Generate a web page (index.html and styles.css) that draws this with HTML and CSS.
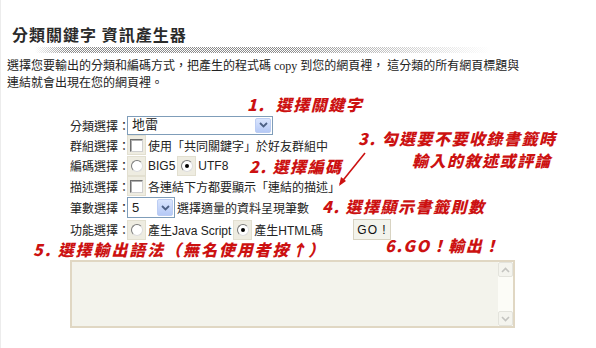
FILE: index.html
```html
<!DOCTYPE html>
<html lang="zh-Hant">
<head>
<meta charset="utf-8">
<title>分類關鍵字 資訊產生器</title>
<link rel="stylesheet" href="styles.css">
</head>
<body>
<div class="page">
  <h1 class="title">分類關鍵字 資訊產生器</h1>
  <div class="rule"></div>
  <p class="intro">選擇您要輸出的分類和編碼方式，把產生的程式碼 copy 到您的網頁裡， 這分類的所有網頁標題與<br>連結就會出現在您的網頁裡。</p>

  <div class="form">
    <div class="row r1">
      <span class="label">分類選擇：</span>
      <span class="select sel-wide"><span class="sel-text">地雷</span><span class="sel-btn"><svg width="9" height="6" viewBox="0 0 9 6"><path d="M1 1 L4.5 4.5 L8 1" fill="none" stroke="#4d6185" stroke-width="1.8"/></svg></span></span>
    </div>
    <div class="row r2">
      <span class="label">群組選擇：</span>
      <span class="ibox"><span class="check"></span></span>
      <span class="txt">使用「共同關鍵字」於好友群組中</span>
    </div>
    <div class="row r3">
      <span class="label">編碼選擇：</span>
      <span class="ibox"><span class="radio"></span></span>
      <span class="txt">BIG5</span>
      <span class="ibox"><span class="radio on"></span></span>
      <span class="txt">UTF8</span>
    </div>
    <div class="row r4">
      <span class="label">描述選擇：</span>
      <span class="ibox"><span class="check"></span></span>
      <span class="txt">各連結下方都要顯示「連結的描述」</span>
    </div>
    <div class="row r5">
      <span class="label">筆數選擇：</span>
      <span class="select sel-small"><span class="sel-text">5</span><span class="sel-btn"><svg width="9" height="6" viewBox="0 0 9 6"><path d="M1 1 L4.5 4.5 L8 1" fill="none" stroke="#4d6185" stroke-width="1.8"/></svg></span></span>
      <span class="txt">選擇適量的資料呈現筆數</span>
    </div>
    <div class="row r6">
      <span class="label">功能選擇：</span>
      <span class="ibox"><span class="radio"></span></span>
      <span class="txt">產生Java Script</span>
      <span class="ibox"><span class="radio on"></span></span>
      <span class="txt">產生HTML碼</span>
      <span class="go">GO !</span>
    </div>
    <div class="output">
      <div class="out-area"></div>
      <div class="scroll">
        <span class="sbtn"><svg width="9" height="6" viewBox="0 0 9 6"><path d="M1 5 L4.5 1.5 L8 5" fill="none" stroke="#c4c4c0" stroke-width="1.6"/></svg></span>
        <span class="strack"></span>
        <span class="sbtn"><svg width="9" height="6" viewBox="0 0 9 6"><path d="M1 1 L4.5 4.5 L8 1" fill="none" stroke="#c4c4c0" stroke-width="1.6"/></svg></span>
      </div>
    </div>
  </div>

  <div class="note n1">1.&nbsp; 選擇關鍵字</div>
  <div class="note n3a">3. 勾選要不要收錄書籤時</div>
  <div class="note n3b">輸入的敘述或評論</div>
  <div class="note n2">2. 選擇編碼</div>
  <div class="note n4">4. 選擇顯示書籤則數</div>
  <div class="note n5">5. 選擇輸出語法（無名使用者按↑）</div>
  <div class="note n6">6.GO！輸出！</div>
  <svg class="arrow" width="40" height="40" viewBox="0 0 40 40">
    <path d="M30 3 L5 34" fill="none" stroke="#cc1111" stroke-width="1.6"/>
    <path d="M4 36 L6 27 L11 31 Z" fill="#cc1111"/>
  </svg>
</div>
</body>
</html>
```

FILE: styles.css
```css
html, body {
  margin: 0;
  padding: 0;
  background: #fff;
}
body {
  width: 596px;
  height: 348px;
  overflow: hidden;
}
.page {
  position: relative;
  height: 348px;
  border-left: 1px solid #ececec;
  box-sizing: border-box;
  color: #222;
  font-family: "Liberation Sans", "Noto Sans CJK TC", sans-serif;
}
.title {
  margin: 0;
  padding: 24px 0 0 11px;
  font-size: 16px;
  line-height: 20px;
  font-weight: bold;
  letter-spacing: 1px;
  color: #2a2a2a;
  font-family: "Noto Sans CJK TC", sans-serif;
}
.rule {
  margin: 3px 0 0 34px;
  width: 456px;
  height: 6px;
  background-image: repeating-conic-gradient(#8a8a8a 0 25%, #fff 0 50%);
  background-size: 2px 2px;
  -webkit-mask-image: linear-gradient(to right, transparent 0, #000 7%, #000 55%, transparent 100%);
  mask-image: linear-gradient(to right, transparent 0, #000 7%, #000 55%, transparent 100%);
}
.intro {
  margin: 5px 0 0 6px;
  font-size: 12px;
  line-height: 17px;
  font-family: "Liberation Serif", "Noto Sans CJK TC", serif;
  color: #222;
}
.form {
  margin: 23px 0 0 69px;
  font-size: 12px;
}
.row {
  display: flex;
  align-items: center;
}
.r1 { height: 20px; }
.r2 { height: 20px; }
.r3 { height: 21px; }
.r4 { height: 20px; }
.r5 { height: 23px; }
.r6 { height: 21px; }
.label {
  width: 57px;
  flex: none;
  white-space: nowrap;
}
.txt {
  white-space: nowrap;
  margin: 0 2px 0 2px;
}
.ibox {
  width: 19px;
  height: 20px;
  box-sizing: border-box;
  background: #eeece1;
  border: 1px solid #e2dfd0;
  display: flex;
  align-items: center;
  justify-content: center;
  flex: none;
}
.check {
  width: 13px;
  height: 13px;
  box-sizing: border-box;
  background: #fff;
  border: 1px solid;
  border-color: #6e6e6e #d0d0d0 #d0d0d0 #6e6e6e;
  box-shadow: inset 1px 1px 0 #b0b0b0;
}
.radio {
  width: 12px;
  height: 12px;
  box-sizing: border-box;
  border-radius: 50%;
  background: #fff;
  border: 1px solid;
  border-color: #7a7a7a #dcdcdc #dcdcdc #7a7a7a;
  position: relative;
}
.radio.on::after {
  content: "";
  position: absolute;
  left: 3px;
  top: 3px;
  width: 4px;
  height: 4px;
  border-radius: 50%;
  background: #000;
}
.select {
  display: flex;
  align-items: center;
  box-sizing: border-box;
  border: 1px solid #7f9db9;
  background: #fff;
  flex: none;
}
.sel-wide { width: 146px; height: 19px; }
.sel-small { width: 48px; height: 21px; }
.sel-text {
  flex: 1;
  padding-left: 4px;
  font-size: 13px;
  line-height: 16px;
}
.sel-btn {
  width: 16px;
  height: calc(100% - 2px);
  margin-right: 1px;
  box-sizing: border-box;
  border: 1px solid #bccdf3;
  border-radius: 2px;
  background: linear-gradient(#dae5fd, #b5c9f6);
  display: flex;
  align-items: center;
  justify-content: center;
}
.go {
  margin-left: 28px;
  width: 38px;
  height: 21px;
  box-sizing: border-box;
  border: 1px solid #d8d3c2;
  background: #f3f3ec;
  display: flex;
  align-items: center;
  justify-content: center;
  font-size: 12px;
  letter-spacing: 1px;
  color: #111;
}
.output {
  margin-top: 20px;
  width: 445px;
  height: 68px;
  box-sizing: border-box;
  border: 2px solid #e0d7c3;
  background: #f3f3ec;
  display: flex;
}
.out-area { flex: 1; }
.scroll {
  width: 15px;
  background: #fcfcf7;
  display: flex;
  flex-direction: column;
}
.sbtn {
  height: 15px;
  box-sizing: border-box;
  border: 1px solid #e3e3dc;
  border-radius: 2px;
  background: #f4f4ee;
  display: flex;
  align-items: center;
  justify-content: center;
}
.strack { flex: 1; }
.note {
  position: absolute;
  color: #cc1111;
  font-family: "Noto Sans CJK TC", sans-serif;
  font-weight: 900;
  font-style: italic;
  font-size: 16px;
  line-height: 16px;
  letter-spacing: 1.5px;
  white-space: nowrap;
}
.n1 { left: 246px; top: 96px; }
.n3a { left: 357px; top: 130px; }
.n3b { left: 411px; top: 152px; }
.n2 { left: 248px; top: 158px; }
.n4 { left: 321px; top: 198px; }
.n5 { left: 32px; top: 241px; letter-spacing: 1.9px; }
.n6 { left: 384px; top: 237px; }
.arrow {
  position: absolute;
  left: 334px;
  top: 150px;
}
```
